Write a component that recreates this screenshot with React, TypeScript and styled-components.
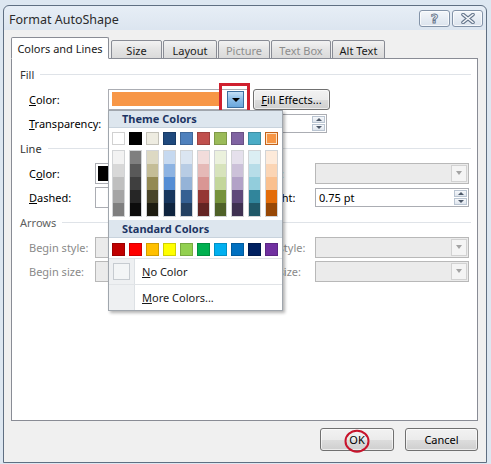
import styled, { createGlobalStyle } from "styled-components";

const GlobalStyle = createGlobalStyle`
  html, body {
    margin: 0;
    padding: 0;
  }
  body {
    width: 491px;
    height: 464px;
    overflow: hidden;
    background: #dde7f1;
    font-family: "Noto Sans", "Open Sans", sans-serif;
    font-size: 11px;
    color: #000;
  }
  * {
    box-sizing: border-box;
  }
`;

// office 2007 palette
const themeTop = ["#FFFFFF", "#000000", "#EEECE1", "#1F497D", "#4F81BD", "#C0504D", "#9BBB59", "#8064A2", "#4BACC6", "#F79646"];
const themeShades = [
  ["#F2F2F2", "#D8D8D8", "#BFBFBF", "#A5A5A5", "#7F7F7F"],
  ["#7F7F7F", "#595959", "#3F3F3F", "#262626", "#0C0C0C"],
  ["#DDD9C3", "#C4BD97", "#938953", "#494429", "#1D1B10"],
  ["#C6D9F0", "#8DB3E2", "#548DD4", "#17365D", "#0F243E"],
  ["#DBE5F1", "#B8CCE4", "#95B3D7", "#366092", "#244061"],
  ["#F2DCDB", "#E5B9B7", "#D99694", "#953734", "#632423"],
  ["#EBF1DD", "#D7E3BC", "#C3D69B", "#76923C", "#4F6128"],
  ["#E5E0EC", "#CCC1D9", "#B2A2C7", "#5F497A", "#3F3151"],
  ["#DBEEF3", "#B7DDE8", "#92CDDC", "#31859B", "#205867"],
  ["#FDEADA", "#FBD5B5", "#FAC08F", "#E36C09", "#974806"],
];
const standardColors = ["#C00000", "#FF0000", "#FFC000", "#FFFF00", "#92D050", "#00B050", "#00B0F0", "#0070C0", "#002060", "#7030A0"];

const tabs = [
  { label: "Colors and Lines", w: 98, active: true },
  { label: "Size", w: 51 },
  { label: "Layout", w: 54 },
  { label: "Picture", w: 52, disabled: true },
  { label: "Text Box", w: 60, disabled: true },
  { label: "Alt Text", w: 53 },
];

/* ---------- window chrome ---------- */

const Window = styled.div`
  margin: 5px 0 0 3px;
  width: 484px;
  height: 458px;
  display: flex;
  flex-direction: column;
  border: 1px solid #5f6f82;
  border-radius: 6px 6px 0 0;
  background: linear-gradient(#e7eef6, #d9e3ee 30px);
  overflow: hidden;
`;

const TitleBar = styled.div`
  height: 24px;
  display: flex;
  align-items: center;
  justify-content: space-between;
  padding: 0 3px 0 5px;
`;

const Title = styled.div`
  font-size: 12.5px;
  color: #2b2b2b;
  padding-top: 2px;
`;

const CaptionButtons = styled.div`
  display: flex;
  gap: 2px;
  align-self: flex-start;
  margin-top: 4px;
`;

const CaptionButton = styled.div<{ $w: number }>`
  width: ${(p) => p.$w}px;
  height: 17px;
  display: flex;
  align-items: center;
  justify-content: center;
  border: 1px solid #8393a8;
  border-radius: 3px;
  background: linear-gradient(#f3f6fa, #dbe3ed);
  box-shadow: inset 0 0 0 1px rgba(255, 255, 255, 0.7);
`;

const HelpGlyph = styled.span`
  font-family: "DejaVu Sans", sans-serif;
  font-weight: bold;
  font-size: 13px;
  line-height: 1;
  color: #f4f6f9;
  -webkit-text-stroke: 0.9px #66768c;
`;

const Client = styled.div`
  flex: 1;
  display: flex;
  flex-direction: column;
  background: #f0f0f0;
  padding: 7px 8px 0 7px;
`;

/* ---------- tabs ---------- */

const TabRow = styled.div`
  display: flex;
  align-items: flex-end;
  height: 22px;
  gap: 1px;
  position: relative;
  z-index: 2;
`;

const Tab = styled.div<{ $w: number; $active?: boolean; $disabled?: boolean }>`
  width: ${(p) => p.$w}px;
  height: ${(p) => (p.$active ? 22 : 19)}px;
  display: flex;
  align-items: center;
  justify-content: center;
  padding-top: ${(p) => (p.$active ? 0 : 1)}px;
  border: 1px solid #898c95;
  border-bottom-color: ${(p) => (p.$active ? "#fff" : "#898c95")};
  border-radius: 2px 2px 0 0;
  background: ${(p) => (p.$active ? "#fff" : "linear-gradient(#f2f2f2, #e4e4e4 50%, #dadada)")};
  color: ${(p) => (p.$disabled ? "#8d8d8d" : "#1a1a1a")};
  margin-right: ${(p) => (p.$active ? 1 : 0)}px;
`;

const Panel = styled.div`
  position: relative;
  margin-top: -1px;
  height: 363px;
  border: 1px solid #898c95;
  background: #fff;
  padding: 2px 6px 0 8px;
`;

/* ---------- panel rows ---------- */

const SectionHeader = styled.div<{ $dim?: boolean }>`
  height: 26px;
  display: flex;
  align-items: center;
  gap: 6px;
  color: ${(p) => (p.$dim ? "#5e5e5e" : "#333")};

  &::after {
    content: "";
    flex: 1;
    height: 1px;
    background: #dfe3e8;
  }
`;

const Row = styled.div`
  height: 24px;
  display: flex;
  align-items: center;
  padding-left: 9px;
`;

const Label = styled.span<{ $w: number; $disabled?: boolean }>`
  width: ${(p) => p.$w}px;
  flex-shrink: 0;
  white-space: nowrap;
  color: ${(p) => (p.$disabled ? "#8a8a8a" : "#000")};
`;

const SideLabel = styled(Label)`
  margin-left: 6px;
`;

const Combo = styled.div<{ $w: number; $disabled?: boolean }>`
  width: ${(p) => p.$w}px;
  height: 21px;
  flex-shrink: 0;
  display: flex;
  align-items: stretch;
  border: 1px solid ${(p) => (p.$disabled ? "#b8b8b8" : "#abadb3")};
  background: ${(p) => (p.$disabled ? "#ebebeb" : "#fff")};
`;

const ComboFill = styled.div`
  flex: 1;
  padding: 2px;
  display: flex;
`;

const LineSwatch = styled.div`
  width: 40px;
  background: #000;
`;

const ComboArrow = styled.div<{ $disabled?: boolean }>`
  width: 16px;
  margin: 1px;
  display: flex;
  align-items: center;
  justify-content: center;
  border: 1px solid ${(p) => (p.$disabled ? "#d2d2d2" : "#b8c2cf")};
  background: ${(p) => (p.$disabled ? "#f4f4f4" : "linear-gradient(#f7f9fb, #e1e7ef)")};

  &::after {
    content: "";
    border-left: 3.5px solid transparent;
    border-right: 3.5px solid transparent;
    border-top: 4px solid ${(p) => (p.$disabled ? "#a3a3a3" : "#333")};
  }
`;

const Spinner = styled.div<{ $w: number; $gap?: number }>`
  width: ${(p) => p.$w}px;
  height: 19px;
  flex-shrink: 0;
  margin-left: ${(p) => p.$gap ?? 0}px;
  display: flex;
  border: 1px solid #abadb3;
  background: #fff;
`;

const SpinText = styled.div`
  flex: 1;
  display: flex;
  align-items: center;
  padding-left: 3px;
`;

const SpinButtons = styled.div`
  width: 15px;
  display: flex;
  flex-direction: column;
  gap: 1px;
  padding: 1px;
`;

const SpinButton = styled.div<{ $down?: boolean }>`
  flex: 1;
  display: flex;
  align-items: center;
  justify-content: center;
  border: 1px solid #b9c4d1;
  background: linear-gradient(#f6f8fb, #dfe5ed);

  &::after {
    content: "";
    border-left: 3px solid transparent;
    border-right: 3px solid transparent;
    ${(p) => (p.$down ? "border-top: 3px solid #4c5869;" : "border-bottom: 3px solid #4c5869;")}
  }
`;

const SliderTrack = styled.div`
  width: 136px;
  height: 4px;
  flex-shrink: 0;
  border: 1px solid #b0b0b0;
  background: #e7e7e7;
`;

/* ---------- fill colour combo + popup ---------- */

const ColorCombo = styled.div`
  position: relative;
  width: 140px;
  height: 21px;
  display: flex;
  align-items: center;
  padding: 2px 3px;
  border: 1px solid #abadb3;
  background: #fff;
`;

const ChosenColor = styled.div<{ $color: string }>`
  width: 107px;
  height: 14px;
  background: ${(p) => p.$color};
`;

const DropButton = styled.div`
  position: relative;
  width: 17px;
  height: 17px;
  margin-left: 8px;
  display: flex;
  align-items: center;
  justify-content: center;
  border: 1px solid #3c6f9f;
  background: linear-gradient(#c4e0f7, #8bbde8 50%, #6aa7dc);

  &::after {
    content: "";
    border-left: 4px solid transparent;
    border-right: 4px solid transparent;
    border-top: 4px solid #000;
    margin-top: 2px;
  }
`;

const Highlight = styled.div`
  position: absolute;
  left: -9px;
  top: -9px;
  width: 31px;
  height: 30px;
  border: 3px solid #cf1f2e;
  pointer-events: none;
`;

const Popup = styled.div`
  position: absolute;
  left: -1px;
  top: calc(100% + 1px);
  z-index: 10;
  width: 175px;
  display: flex;
  flex-direction: column;
  border: 1px solid #a0a6ad;
  background: #fff;
  box-shadow: 2px 2px 3px rgba(0, 0, 0, 0.3);
`;

const PaletteHeader = styled.div<{ $h: number; $top?: number }>`
  height: ${(p) => p.$h}px;
  margin-top: ${(p) => p.$top ?? 0}px;
  display: flex;
  align-items: center;
  padding-left: 13px;
  background: #dde6ee;
  border-bottom: 1px solid #c8d3dd;
  font-weight: bold;
  color: #1c3564;
`;

const SwatchRow = styled.div<{ $top: number }>`
  display: flex;
  gap: 4px;
  padding-left: 3px;
  margin-top: ${(p) => p.$top}px;
`;

const Swatch = styled.div<{ $color: string; $selected?: boolean }>`
  width: 13px;
  height: 13px;
  background: ${(p) => p.$color};
  border: 1px solid ${(p) => (p.$selected ? "#c4621a" : "rgba(0, 0, 0, 0.18)")};
  box-shadow: ${(p) => (p.$selected ? "inset 0 0 0 1px #fde3c4" : "none")};
`;

const ShadeColumn = styled.div`
  width: 13px;
  display: flex;
  flex-direction: column;
  border: 1px solid #d2d4d6;
`;

const Shade = styled.div<{ $color: string }>`
  height: 13px;
  background: ${(p) => p.$color};
`;

const MenuItem = styled.div<{ $first?: boolean }>`
  height: 26px;
  display: flex;
  align-items: stretch;
  border-top: 1px solid #e1e4e7;
  margin-top: ${(p) => (p.$first ? 2 : 0)}px;
`;

const Gutter = styled.div`
  width: 26px;
  display: flex;
  align-items: center;
  justify-content: center;
  background: #eef0f2;
  border-right: 1px solid #dde1e5;
`;

const NoColorBox = styled.div`
  width: 17px;
  height: 17px;
  border: 1px solid #c6cbd0;
  background: #f3f5f6;
`;

const MenuText = styled.div`
  display: flex;
  align-items: center;
  padding-left: 7px;
  color: #1a1a1a;
`;

/* ---------- buttons ---------- */

const PushButton = styled.div<{ $w: number; $h?: number; $gap?: number }>`
  position: relative;
  width: ${(p) => p.$w}px;
  height: ${(p) => p.$h ?? 23}px;
  margin-left: ${(p) => p.$gap ?? 0}px;
  display: flex;
  align-items: center;
  justify-content: center;
  border: 1px solid #707070;
  border-radius: 3px;
  background: linear-gradient(#f2f2f2, #ebebeb 50%, #dddddd 51%, #cfcfcf);
  box-shadow: inset 0 0 0 1px rgba(255, 255, 255, 0.6);
  flex-shrink: 0;
`;

const Footer = styled.div`
  display: flex;
  justify-content: flex-end;
  gap: 11px;
  padding-top: 7px;
`;

const CircleMark = styled.div`
  position: absolute;
  left: 50%;
  top: 50%;
  width: 25px;
  height: 23px;
  transform: translate(-50%, -45%);
  border: 2.5px solid #c8142c;
  border-radius: 50%;
  pointer-events: none;
`;

function CloseGlyph() {
  return (
    <svg width="14" height="11" viewBox="0 0 14 11">
      <path d="M2 1.5 L12 9.5 M12 1.5 L2 9.5" stroke="#66768c" strokeWidth="3.6" strokeLinecap="round" />
      <path d="M2 1.5 L12 9.5 M12 1.5 L2 9.5" stroke="#f4f6f9" strokeWidth="1.6" strokeLinecap="round" />
    </svg>
  );
}

function ColorPopup() {
  return (
    <Popup>
      <PaletteHeader $h={17}>Theme Colors</PaletteHeader>
      <SwatchRow $top={4}>
        {themeTop.map((c, i) => (
          <Swatch key={c} $color={c} $selected={i === 9} />
        ))}
      </SwatchRow>
      <SwatchRow $top={5}>
        {themeShades.map((col, i) => (
          <ShadeColumn key={i}>
            {col.map((c, j) => (
              <Shade key={j} $color={c} />
            ))}
          </ShadeColumn>
        ))}
      </SwatchRow>
      <PaletteHeader $h={18} $top={3}>
        Standard Colors
      </PaletteHeader>
      <SwatchRow $top={5}>
        {standardColors.map((c) => (
          <Swatch key={c} $color={c} />
        ))}
      </SwatchRow>
      <MenuItem $first>
        <Gutter>
          <NoColorBox />
        </Gutter>
        <MenuText>
          <span>
            <u>N</u>o Color
          </span>
        </MenuText>
      </MenuItem>
      <MenuItem>
        <Gutter />
        <MenuText>
          <span>
            <u>M</u>ore Colors...
          </span>
        </MenuText>
      </MenuItem>
    </Popup>
  );
}

export default function App() {
  return (
    <>
      <GlobalStyle />
      <Window>
        <TitleBar>
          <Title>Format AutoShape</Title>
          <CaptionButtons>
            <CaptionButton $w={31}>
              <HelpGlyph>?</HelpGlyph>
            </CaptionButton>
            <CaptionButton $w={31}>
              <CloseGlyph />
            </CaptionButton>
          </CaptionButtons>
        </TitleBar>

        <Client>
          <TabRow>
            {tabs.map((t) => (
              <Tab key={t.label} $w={t.w} $active={t.active} $disabled={t.disabled}>
                {t.label}
              </Tab>
            ))}
          </TabRow>

          <Panel>
            <SectionHeader>Fill</SectionHeader>
            <Row>
              <Label $w={79}>
                <u>C</u>olor:
              </Label>
              <ColorCombo>
                <ChosenColor $color="#F79646" />
                <DropButton>
                  <Highlight />
                </DropButton>
                <ColorPopup />
              </ColorCombo>
              <PushButton $w={77} $h={21} $gap={5}>
                <span>
                  <u>F</u>ill Effects...
                </span>
              </PushButton>
            </Row>
            <Row>
              <Label $w={79}>
                <u>T</u>ransparency:
              </Label>
              <SliderTrack />
              <Spinner $w={77} $gap={6}>
                <SpinText>0 %</SpinText>
                <SpinButtons>
                  <SpinButton />
                  <SpinButton $down />
                </SpinButtons>
              </Spinner>
            </Row>

            <SectionHeader>Line</SectionHeader>
            <Row>
              <Label $w={66}>
                C<u>o</u>lor:
              </Label>
              <Combo $w={155}>
                <ComboFill>
                  <LineSwatch />
                </ComboFill>
                <ComboArrow />
              </Combo>
              <SideLabel $w={59}>Style:</SideLabel>
              <Combo $w={154} $disabled>
                <ComboFill />
                <ComboArrow $disabled />
              </Combo>
            </Row>
            <Row>
              <Label $w={66}>
                <u>D</u>ashed:
              </Label>
              <Combo $w={155}>
                <ComboFill />
                <ComboArrow />
              </Combo>
              <SideLabel $w={59}>Weight:</SideLabel>
              <Spinner $w={154}>
                <SpinText>0.75 pt</SpinText>
                <SpinButtons>
                  <SpinButton />
                  <SpinButton $down />
                </SpinButtons>
              </Spinner>
            </Row>

            <SectionHeader $dim>Arrows</SectionHeader>
            <Row>
              <Label $w={66} $disabled>
                Begin style:
              </Label>
              <Combo $w={155} $disabled>
                <ComboFill />
                <ComboArrow $disabled />
              </Combo>
              <SideLabel $w={59} $disabled>
                End style:
              </SideLabel>
              <Combo $w={154} $disabled>
                <ComboFill />
                <ComboArrow $disabled />
              </Combo>
            </Row>
            <Row>
              <Label $w={66} $disabled>
                Begin size:
              </Label>
              <Combo $w={155} $disabled>
                <ComboFill />
                <ComboArrow $disabled />
              </Combo>
              <SideLabel $w={59} $disabled>
                End size:
              </SideLabel>
              <Combo $w={154} $disabled>
                <ComboFill />
                <ComboArrow $disabled />
              </Combo>
            </Row>
          </Panel>

          <Footer>
            <PushButton $w={74}>
              OK
              <CircleMark />
            </PushButton>
            <PushButton $w={73}>Cancel</PushButton>
          </Footer>
        </Client>
      </Window>
    </>
  );
}
